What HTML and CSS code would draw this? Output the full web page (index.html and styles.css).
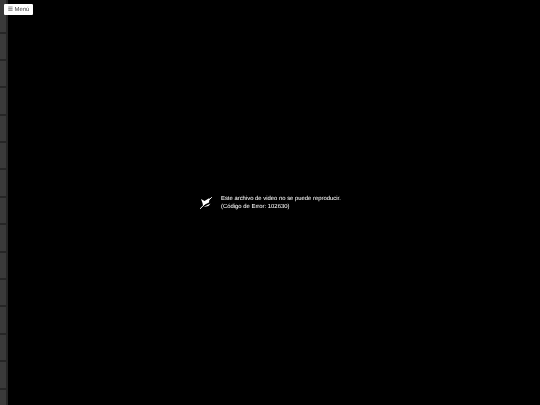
FILE: index.html
```
<!DOCTYPE html>
<html lang="es">
<head>
<meta charset="utf-8">
<title>Menú</title>
<link rel="stylesheet" href="styles.css">
</head>
<body>
<div class="page">
  <aside class="rail">
    <div class="thumbs">
      <div class="thumb first"></div>
      <div class="thumb"></div><div class="thumb"></div><div class="thumb"></div>
      <div class="thumb"></div><div class="thumb"></div><div class="thumb"></div>
      <div class="thumb"></div><div class="thumb"></div><div class="thumb"></div>
      <div class="thumb"></div><div class="thumb"></div><div class="thumb"></div>
      <div class="thumb"></div><div class="thumb"></div>
    </div>
  </aside>
  <main class="stage">
    <div class="error">
      <svg class="error-icon" width="14" height="14" viewBox="0 0 14 14" aria-hidden="true">
        <path class="fill" d="M2 3 L5.5 5 L10.5 2 L10 6.5 L4 9.5 L3.5 7 Z"/>
        <path class="fill" d="M4.5 11 L11.5 7.5 L9.5 10 Z"/>
        <path class="line" d="M12.8 1.2 L1 12.8"/>
      </svg>
      <p class="error-text">Este archivo de video no se puede reproducir.<br>(Código de Error: 102630)</p>
    </div>
  </main>
</div>
<button class="menu" type="button">☰ Menú</button>
</body>
</html>
```
FILE: styles.css
```
html, body {
  margin: 0;
  height: 100%;
  background: #000;
  overflow: hidden;
}
.page {
  display: flex;
  height: 405px;
  font-family: "Liberation Sans", Arial, sans-serif;
}
.rail {
  width: 8px;
  flex: none;
  background: #262626;
  overflow: hidden;
}
.thumbs {
  width: 6px;
  display: flex;
  flex-direction: column;
  gap: 2px;
}
.thumb {
  flex: none;
  height: 25.4px;
  background: #3a3a3a;
}
.thumb.first {
  height: 31.5px;
}
.stage {
  flex: 1;
  display: flex;
  align-items: center;
  justify-content: center;
  background: #000;
  padding-right: 8px;
}
.error {
  display: flex;
  align-items: center;
  gap: 8px;
}
.error-icon {
  flex: none;
}
.fill {
  fill: #fff;
}
.line {
  stroke: #fff;
  stroke-width: 1;
  fill: none;
}
.error-text {
  margin: 0;
  color: #f4f4f4;
  font-size: 5.9px;
  line-height: 8px;
  text-rendering: geometricPrecision;
  text-shadow: 0 0 0.6px rgba(255, 255, 255, 0.25);
  will-change: transform;
}
.menu {
  position: absolute;
  left: 4px;
  top: 4px;
  width: 29px;
  height: 11px;
  padding: 1px 0 0;
  border: 0;
  border-radius: 1px;
  background: #fff;
  color: #555;
  font-family: "Liberation Sans", Arial, sans-serif;
  font-size: 5.9px;
  line-height: 10px;
  white-space: nowrap;
  text-rendering: geometricPrecision;
  text-shadow: 0 0 0.6px rgba(85, 85, 85, 0.25);
  will-change: transform;
}
```
